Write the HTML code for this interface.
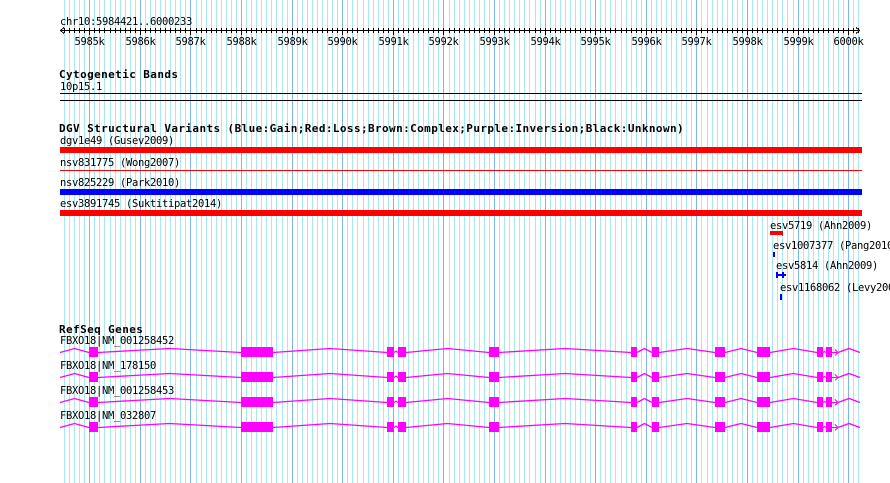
<!DOCTYPE html>
<html><head><meta charset="utf-8"><style>
html,body{margin:0;padding:0;background:#fff;width:890px;height:483px;overflow:hidden}
svg{display:block}
text{font-family:"DejaVu Sans Mono","Liberation Mono",monospace;font-size:10.5px;letter-spacing:-0.32px;fill:#000}
.b{font-weight:bold;font-size:11px;letter-spacing:0.4px}
</style></head><body>
<svg id="s" width="890" height="483" viewBox="0 0 890 483" xmlns="http://www.w3.org/2000/svg" shape-rendering="crispEdges">
<g id="grid"></g>
<g id="ruler" stroke="#000" stroke-width="1"></g>
<text x="60" y="25">chr10:5984421..6000233</text>
<g id="rlab"></g>
<text class="b" x="59" y="78">Cytogenetic Bands</text>
<text x="60" y="90">10p15.1</text>
<rect x="60" y="93" width="802" height="1" fill="#000"/>
<rect x="60" y="100" width="802" height="1" fill="#000"/>
<text class="b" x="59" y="132">DGV Structural Variants (Blue:Gain;Red:Loss;Brown:Complex;Purple:Inversion;Black:Unknown)</text>
<text x="60" y="144">dgv1e49 (Gusev2009)</text>
<rect x="60" y="147" width="802" height="6" fill="#f00"/>
<text x="60" y="166">nsv831775 (Wong2007)</text>
<rect x="60" y="170" width="802" height="1" fill="#f00"/>
<text x="60" y="186">nsv825229 (Park2010)</text>
<rect x="60" y="189" width="802" height="6" fill="#00f"/>
<text x="60" y="207">esv3891745 (Suktitipat2014)</text>
<rect x="60" y="210" width="802" height="6" fill="#f00"/>
<text x="770" y="229">esv5719 (Ahn2009)</text>
<rect x="770" y="231" width="12" height="4" fill="#f00"/>
<rect x="782" y="231" width="1" height="5" fill="#f00"/>
<text x="773" y="249">esv1007377 (Pang2010)</text>
<rect x="773" y="252" width="2" height="5" fill="#00f"/>
<text x="776" y="269">esv5814 (Ahn2009)</text>
<rect x="776" y="272" width="2" height="6" fill="#00f"/><rect x="778" y="274" width="4" height="2" fill="#00f"/><rect x="782" y="272" width="2" height="6" fill="#00f"/><rect x="784" y="274" width="2" height="2" fill="#00f"/>
<text x="780" y="291">esv1168062 (Levy2007)</text>
<rect x="780" y="294" width="2" height="6" fill="#00f"/>
<text class="b" x="59" y="333">RefSeq Genes</text>
<text x="60" y="344">FBXO18|NM_001258452</text>
<text x="60" y="369">FBXO18|NM_178150</text>
<text x="60" y="394">FBXO18|NM_001258453</text>
<text x="60" y="419">FBXO18|NM_032807</text>
<g id="genes"></g>
</svg>
<script>
var NS="http://www.w3.org/2000/svg";
function el(p,t,a){var e=document.createElementNS(NS,t);for(var k in a)e.setAttribute(k,a[k]);p.appendChild(e);return e;}
var sc=800/15812;function X(bp){return 60+(bp-5984421)*sc;}
var g=document.getElementById('grid'),r=document.getElementById('ruler'),rl=document.getElementById('rlab');
for(var bp=5984500;bp<=6000200;bp+=100){
 var x=Math.round(X(bp))+0.5,maj=bp%1000==0;
 el(g,'line',{x1:x,y1:0,x2:x,y2:483,stroke:maj?'#7cb6e8':'#a8e8f2','stroke-width':1});
 el(r,'line',{x1:x,y1:28,x2:x,y2:maj?35:33});
 if(maj){var t=el(rl,'text',{x:x,y:45,'text-anchor':'middle'});t.textContent=(bp/1000)+'k';}
}
el(r,'line',{x1:60,y1:30.5,x2:860,y2:30.5});
el(r,'polyline',{points:'64,27.5 60.5,30.5 64,33.5',fill:'none'});
el(r,'polyline',{points:'856,27.5 859.5,30.5 856,33.5',fill:'none'});
var ex=[[89,98],[241,273],[387,394],[398,406],[489,499],[631,637],[652,659],[715,725],[757,770],[817,823],[826,832]];
var gg=document.getElementById('genes');
for(var i=0;i<4;i++){
 var y=352+i*25;
 var segs=[[60,89]];
 for(var j=0;j<ex.length-1;j++)segs.push([ex[j][1],ex[j+1][0]]);
 segs.push([838,860]);
 segs.forEach(function(s){
   var m=(s[0]+s[1])/2,h=Math.min(4,(s[1]-s[0])/3);
   el(gg,'polyline',{points:s[0]+','+(y+0.5)+' '+m+','+(y+0.5-h)+' '+s[1]+','+(y+0.5),fill:'none',stroke:'#f0f','stroke-width':1.3,'shape-rendering':'auto'});
 });
 ex.forEach(function(e){el(gg,'rect',{x:e[0],y:y-5,width:e[1]-e[0],height:10,fill:'#f0f'});});
 el(gg,'line',{x1:832,y1:y+0.5,x2:838,y2:y+0.5,stroke:'#f0f'});
 el(gg,'polyline',{points:'835,'+(y-2.5)+' 838,'+(y+0.5)+' 835,'+(y+3.5),fill:'none',stroke:'#f0f'});
}
</script>
</body></html>
